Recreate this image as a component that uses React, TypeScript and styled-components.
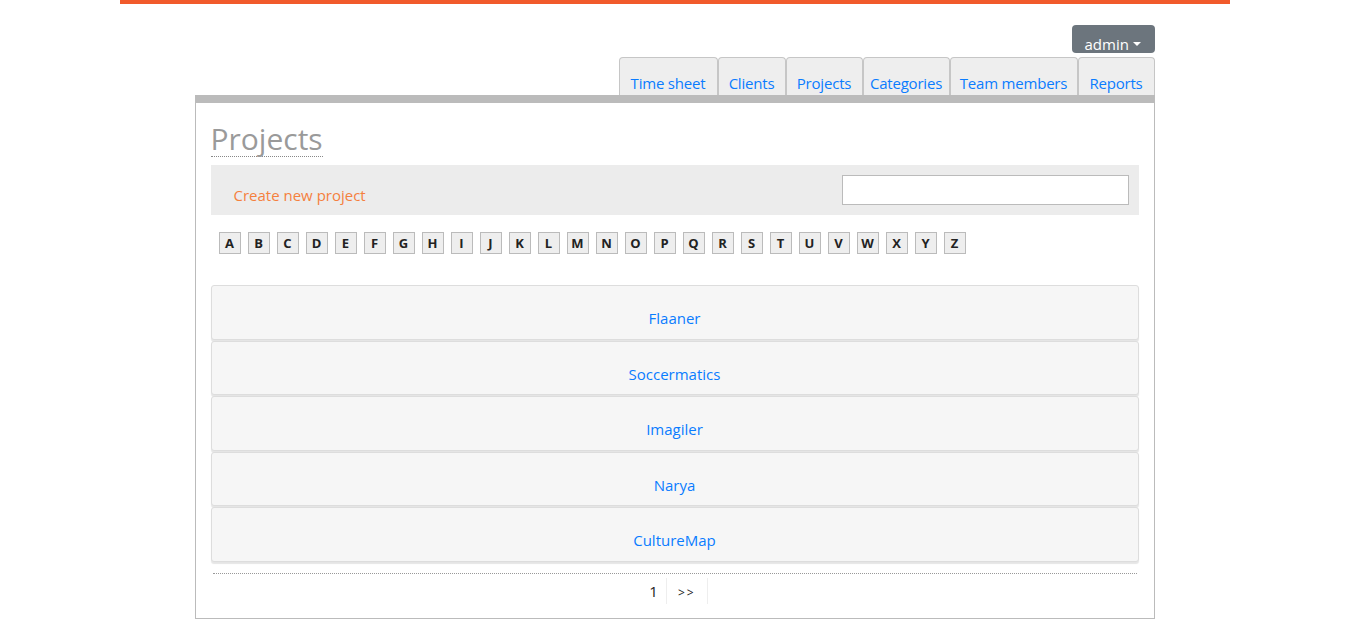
import React from "react";
import styled, { createGlobalStyle } from "styled-components";

const GlobalStyle = createGlobalStyle`
  body {
    margin: 0;
    background: #fff;
    font-family: "Open Sans", "Noto Sans", sans-serif;
  }
  * { box-sizing: border-box; }
`;

const tabs: [string, number][] = [
  ["Time sheet", 99],
  ["Clients", 68],
  ["Projects", 77],
  ["Categories", 87],
  ["Team members", 128],
  ["Reports", 77],
];
const letters = "ABCDEFGHIJKLMNOPQRSTUVWXYZ".split("");
const projects = ["Flaaner", "Soccermatics", "Imagiler", "Narya", "CultureMap"];

export default function App() {
  return (
    <>
      <GlobalStyle />
      <TopBar />
      <Container>
        <UserRow>
          <AdminButton>
            admin <Caret />
          </AdminButton>
        </UserRow>
        <Tabs>
          {tabs.map(([t, w]) => (
            <Tab key={t} $w={w}>
              {t}
            </Tab>
          ))}
        </Tabs>
        <Panel>
          <Title>Projects</Title>
          <Toolbar>
            <CreateLink href="#">Create new project</CreateLink>
            <Search type="text" />
          </Toolbar>
          <Letters>
            {letters.map((l) => (
              <Letter key={l}>{l}</Letter>
            ))}
          </Letters>
          <List>
            {projects.map((p) => (
              <Row key={p}>
                <RowLink href="#">{p}</RowLink>
              </Row>
            ))}
          </List>
          <Pager>
            <PageItem>1</PageItem>
            <PageItem $small>&gt;&gt;</PageItem>
          </Pager>
        </Panel>
      </Container>
    </>
  );
}

const TopBar = styled.div`
  width: 1110px;
  height: 4px;
  margin: 0 auto;
  background: #f15a2b;
`;

const Container = styled.div`
  width: 960px;
  margin: 0 auto;
`;

const UserRow = styled.div`
  display: flex;
  justify-content: flex-end;
  margin-top: 21px;
`;

const AdminButton = styled.button`
  display: flex;
  align-items: center;
  gap: 4px;
  height: 28px;
  width: 83px;
  padding: 9px 0 0 13px;
  border: none;
  border-radius: 4px;
  background: #6c757d;
  color: #fff;
  font-family: inherit;
  font-size: 15px;
`;

const Caret = styled.span`
  display: inline-block;
  width: 0;
  height: 0;
  border-left: 4px solid transparent;
  border-right: 4px solid transparent;
  border-top: 4px solid #fff;
  margin-top: 1px;
`;

const Tabs = styled.div`
  display: flex;
  justify-content: flex-end;
  margin-top: 4px;
`;

const Tab = styled.a<{ $w: number }>`
  display: block;
  width: ${(p) => p.$w}px;
  height: 38px;
  padding-top: 14px;
  border: 1px solid #c6c6c6;
  border-bottom: none;
  border-radius: 4px 4px 0 0;
  background: #eee;
  color: #0a7cff;
  font-size: 15px;
  line-height: 22px;
  text-align: center;
  white-space: nowrap;
  letter-spacing: -0.2px;
  cursor: pointer;
`;

const Panel = styled.div`
  border: 1px solid #bbb;
  border-top: 8px solid #bbb;
  padding: 15px 15px 14px;
`;

const Title = styled.h1`
  display: inline-block;
  margin: 4px 0 0;
  font-size: 30px;
  font-weight: 400;
  line-height: 34px;
  color: #9a9a9a;
  border-bottom: 1px dotted #888;
`;

const Toolbar = styled.div`
  display: flex;
  align-items: center;
  justify-content: space-between;
  height: 50px;
  margin-top: 8px;
  padding: 0 10px 0 23px;
  background: #ececec;
`;

const CreateLink = styled.a`
  color: #f5803e;
  font-size: 15px;
  text-decoration: none;
  margin-top: 10px;
`;

const Search = styled.input`
  width: 287px;
  height: 30px;
  border: 1px solid #bbb;
  background: #fff;
  outline: none;
`;

const Letters = styled.div`
  display: flex;
  gap: 7px;
  margin: 17px 0 0 8px;
`;

const Letter = styled.span`
  display: flex;
  align-items: center;
  justify-content: center;
  width: 22px;
  height: 22px;
  border: 1px solid #bbb;
  background: #eee;
  font-size: 13px;
  font-weight: 700;
  color: #222;
`;

const List = styled.div`
  display: flex;
  flex-direction: column;
  gap: 1px;
  margin-top: 31px;
`;

const Row = styled.div`
  height: 54.5px;
  padding-top: 21px;
  text-align: center;
  background: #f6f6f6;
  border: 1px solid #ddd;
  border-radius: 3px;
  box-shadow: 0 2px 1px rgba(0, 0, 0, 0.1);
`;

const RowLink = styled.a`
  color: #0a7cff;
  font-size: 15px;
  line-height: 20px;
  text-decoration: none;
`;

const Pager = styled.div`
  display: flex;
  justify-content: center;
  margin: 11px 2px 0;
  padding-top: 4px;
  border-top: 1px dotted #999;
`;

const PageItem = styled.span<{ $small?: boolean }>`
  display: flex;
  align-items: center;
  height: 26px;
  padding: ${(p) => (p.$small ? "4px 11px 0" : "0 8px")};
  border-right: 1px solid #eee;
  font-size: ${(p) => (p.$small ? "12px" : "15px")};
  letter-spacing: ${(p) => (p.$small ? "2px" : "0")};
  color: #222;
`;
